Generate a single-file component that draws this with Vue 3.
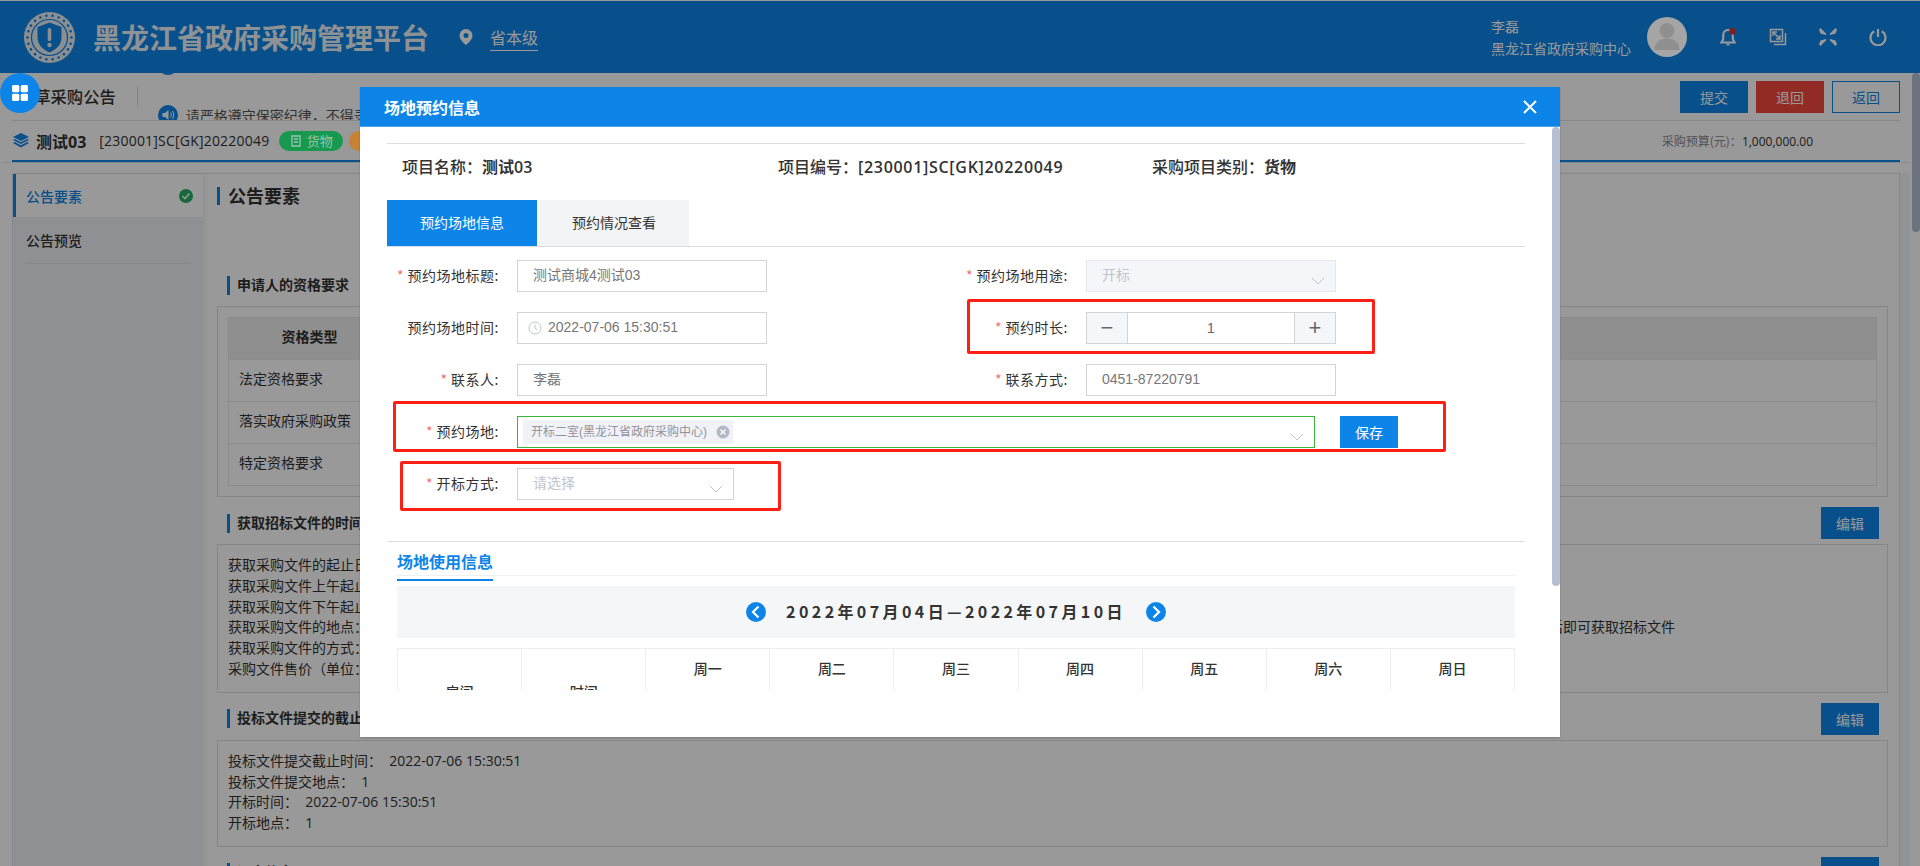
<template>
  <div class="page">
    <header class="topbar">
      <svg class="logo" viewBox="0 0 51 51">
        <circle cx="25.5" cy="25.5" r="25.5" fill="#e9eef3" />
        <circle v-for="(d, i) in logoDots" :key="i" :cx="d.x" :cy="d.y" r="1.3" fill="#0d85e8" />
        <circle cx="25.5" cy="25.5" r="18" fill="#e9eef3" stroke="#0d85e8" stroke-width="1.2" />
        <path d="M25.5 10.5l12 4.500v10c0 7.500-5 12.500-12 15.500-7-3-12-8-12-15.500V15z" fill="#0d85e8" />
        <rect x="23.700" y="16" width="3.600" height="13" rx="1.600" fill="#e9eef3" />
        <circle cx="25.500" cy="33" r="2.200" fill="#e9eef3" />
      </svg>
      <h1 class="brand">黑龙江省政府采购管理平台</h1>
      <svg class="pin" viewBox="0 0 14 16">
        <path d="M7 0a6.500 6.500 0 0 0-6.500 6.500C.5 11 7 16 7 16s6.500-5 6.500-9.500A6.500 6.500 0 0 0 7 0zm0 9a2.500 2.500 0 1 1 0-5 2.500 2.500 0 0 1 0 5z" fill="#fff" />
      </svg>
      <span class="region">省本级</span>

      <div class="user">
        <div class="user-name">李磊</div>
        <div>黑龙江省政府采购中心</div>
      </div>
      <svg class="avatar" viewBox="0 0 40 40">
        <circle cx="20" cy="20" r="20" fill="#a5a5a5" />
        <circle cx="20" cy="13.500" r="7.500" fill="#8f8f8f" />
        <path d="M7.500 33c0-7 5-11.500 12.500-11.500S32.500 26 32.500 33z" fill="#8f8f8f" />
      </svg>
      <div class="top-icons">
        <svg class="top-icon" viewBox="0 0 18 18">
          <path d="M9 2c-3.200 0-4.800 2.500-4.800 5.300v4L2.500 14.500h13l-1.700-3.200v-4C13.800 4.500 12.200 2 9 2z" fill="none" stroke="#fff" stroke-width="2.200" />
          <path d="M6.500 15.500h5L9 18z" fill="#fff" />
          <circle cx="13.500" cy="3.300" r="3.300" fill="#e2312a" />
        </svg>
        <svg class="top-icon" viewBox="0 0 18 18" fill="none" stroke="#fff">
          <path d="M1.500 1.500h12v12h-12z" stroke-width="1.500" />
          <path d="M16.500 5v11.500H5" stroke-width="1.500" />
          <path d="M4 4l7 7M4 8V4h4M11 7v4H7" stroke-width="1.500" />
        </svg>
        <svg class="top-icon" viewBox="0 0 18 18" fill="#fff">
          <path d="M1.500 0L7.500 6l-1 1-5-1.500L0 1.500zM16.500 0L10.500 6l1 1 5-1.500L18 1.500zM1.500 18l6-6-1-1-5 1.500L0 16.500zM16.500 18l-6-6 1-1 5 1.500L18 16.500z" />
        </svg>
        <svg class="top-icon" viewBox="0 0 18 18" fill="none" stroke="#fff" stroke-width="2.200">
          <path d="M5.200 3.300a7.500 7.500 0 1 0 7.600 0" />
          <path d="M9 1v8" />
        </svg>
      </div>
    </header>

    <div class="crumb-bar">
      <span class="crumb-title">起草采购公告</span>
      <i class="crumb-sep"></i>
      <div class="notice-list">
        <div class="notice-item" v-for="n in notices" :key="n.id">
          <svg class="notice-icon" viewBox="0 0 20 20">
            <circle cx="10" cy="10" r="10" fill="#0d85e8" />
            <path d="M4.500 8h2.500l3.500-3v10L7 12H4.500z" fill="#fff" />
            <path d="M12.500 7.500c1 1.500 1 3.500 0 5M14.500 6c1.500 2.300 1.500 5.700 0 8" fill="none" stroke="#fff" />
          </svg>
          <span>{{ n.text }}</span>
        </div>
      </div>
      <div class="crumb-actions">
        <button class="btn btn-primary">提交</button>
        <button class="btn btn-danger">退回</button>
        <button class="btn btn-outline">返回</button>
      </div>
    </div>

    <div class="project-wrap">
      <div class="project-bar">
        <svg class="layers" viewBox="0 0 16 15" fill="#0d85e8">
          <path d="M8 0l8 4-8 4-8-4z" />
          <path d="M1.800 6L8 9.200 14.200 6 16 7l-8 4-8-4z" />
          <path d="M1.800 9L8 12.200 14.200 9 16 10l-8 4.500L0 10z" />
        </svg>
        <strong class="project-name">测试03</strong>
        <span class="project-code">[230001]SC[GK]20220049</span>
        <span class="tag tag-green">
          <svg viewBox="0 0 12 12" width="12" height="12" fill="none" stroke="currentColor" stroke-width="1.300">
            <path d="M2 1h8v10H2zM4 4h4M4 7h4" />
          </svg>
          货物
        </span>
        <span class="tag tag-orange">公开</span>
        <span class="budget">采购预算(元)：<b>1,000,000.00</b></span>
      </div>
    </div>

    <div class="content">
      <aside class="side">
        <div class="side-item active">
          公告要素
          <svg viewBox="0 0 14 14" width="14" height="14">
            <circle cx="7" cy="7" r="7" fill="#27b060" />
            <path d="M3.500 7l2.500 2.500 4.500-5" fill="none" stroke="#fff" stroke-width="1.600" />
          </svg>
        </div>
        <div class="side-item second">公告预览</div>
      </aside>

      <main class="main">
        <h2 class="main-title">公告要素</h2>

        <section class="section first">
          <div class="section-head"><h3>申请人的资格要求</h3></div>
          <div class="box box-table">
            <table class="req-table">
              <thead>
                <tr><th class="col-type">资格类型</th><th>资格要求</th></tr>
              </thead>
              <tbody>
                <tr v-for="r in reqRows" :key="r"><td>{{ r }}</td><td></td></tr>
              </tbody>
            </table>
          </div>
        </section>

        <section class="section">
          <div class="section-head">
            <h3>获取招标文件的时间地点</h3>
            <button class="btn btn-primary btn-edit">编辑</button>
          </div>
          <div class="box">
            <p>获取采购文件的起止日期：</p>
            <p>获取采购文件上午起止时间：</p>
            <p>获取采购文件下午起止时间：</p>
            <p class="wide-line"><span>获取采购文件的地点：</span><span>后即可获取招标文件</span></p>
            <p>获取采购文件的方式：</p>
            <p>采购文件售价（单位：元）：</p>
          </div>
        </section>

        <section class="section">
          <div class="section-head">
            <h3>投标文件提交的截止时间</h3>
            <button class="btn btn-primary btn-edit">编辑</button>
          </div>
          <div class="box">
            <p>投标文件提交截止时间：&nbsp; 2022-07-06 15:30:51</p>
            <p>投标文件提交地点：&nbsp; 1</p>
            <p>开标时间：&nbsp; 2022-07-06 15:30:51</p>
            <p>开标地点：&nbsp; 1</p>
          </div>
        </section>

        <section class="section">
          <div class="section-head">
            <h3>评审信息</h3>
            <button class="btn btn-primary btn-edit">编辑</button>
          </div>
        </section>
      </main>
    </div>

    <div class="page-scrollbar"></div>
    <div class="mask"></div>

    <button class="float-btn">
      <svg viewBox="0 0 16 16" width="16" height="16" fill="#fff">
        <rect x="0" y="0" width="7.300" height="7.300" rx="1.500" />
        <rect x="8.700" y="0" width="7.300" height="7.300" rx="1.500" />
        <rect x="0" y="8.700" width="7.300" height="7.300" rx="1.500" />
        <rect x="8.700" y="8.700" width="7.300" height="7.300" rx="1.500" />
      </svg>
    </button>

    <!-- 弹窗 -->
    <div class="modal">
      <div class="modal-head">
        <span>场地预约信息</span>
        <svg viewBox="0 0 14 14" width="14" height="14" fill="none" stroke="#fff" stroke-width="2">
          <path d="M1 1l12 12M13 1L1 13" />
        </svg>
      </div>
      <div class="modal-body">
        <div class="info-row">
          <span>项目名称：<b>测试03</b></span>
          <span>项目编号：<b class="code">[230001]SC[GK]20220049</b></span>
          <span>采购项目类别：<b>货物</b></span>
        </div>

        <div class="tabs">
          <div class="tab active">预约场地信息</div>
          <div class="tab">预约情况查看</div>
        </div>

        <div class="form">
          <div class="form-item">
            <label class="required">预约场地标题:</label>
            <div class="input">测试商城4测试03</div>
          </div>
          <div class="form-item">
            <label class="required">预约场地用途:</label>
            <div class="input select disabled">
              开标
              <svg class="chevron" viewBox="0 0 14 8"><path d="M1 1l6 6 6-6" /></svg>
            </div>
          </div>

          <div class="form-item">
            <label>预约场地时间:</label>
            <div class="input has-icon">
              <svg class="clock" viewBox="0 0 14 14" fill="none" stroke="#c0c4cc">
                <circle cx="7" cy="7" r="6" />
                <path d="M7 3.500V7l2.500 2" />
              </svg>
              2022-07-06 15:30:51
            </div>
          </div>
          <div class="form-item">
            <label class="required">预约时长:</label>
            <div class="stepper">
              <span class="step">−</span>
              <span class="step-value">1</span>
              <span class="step">+</span>
            </div>
          </div>

          <div class="form-item">
            <label class="required">联系人:</label>
            <div class="input">李磊</div>
          </div>
          <div class="form-item">
            <label class="required">联系方式:</label>
            <div class="input">0451-87220791</div>
          </div>

          <div class="form-item full">
            <label class="required">预约场地:</label>
            <div class="input select room">
              <span class="chip">
                开标二室(黑龙江省政府采购中心)
                <svg viewBox="0 0 14 14" width="14" height="14">
                  <circle cx="7" cy="7" r="6.500" fill="#b4b8c2" />
                  <path d="M4.500 4.500l5 5M9.500 4.500l-5 5" stroke="#fff" stroke-width="1.300" />
                </svg>
              </span>
              <svg class="chevron" viewBox="0 0 14 8"><path d="M1 1l6 6 6-6" /></svg>
            </div>
            <button class="btn save">保存</button>
          </div>

          <div class="form-item full">
            <label class="required">开标方式:</label>
            <div class="input select way">
              请选择
              <svg class="chevron" viewBox="0 0 14 8"><path d="M1 1l6 6 6-6" /></svg>
            </div>
          </div>
        </div>

        <div class="usage">
          <div class="usage-head"><span>场地使用信息</span></div>
          <div class="date-bar">
            <svg class="date-arrow" viewBox="0 0 20 20">
              <circle cx="10" cy="10" r="10" fill="#0d85e8" />
              <path d="M12.500 4.500L7 10l5.500 5.500" fill="none" stroke="#fff" stroke-width="2.200" />
            </svg>
            <span class="date-text">2022年07月04日—2022年07月10日</span>
            <svg class="date-arrow" viewBox="0 0 20 20">
              <circle cx="10" cy="10" r="10" fill="#0d85e8" />
              <path d="M7.500 4.500L13 10l-5.500 5.500" fill="none" stroke="#fff" stroke-width="2.200" />
            </svg>
          </div>
          <table class="week-table">
            <thead>
              <tr>
                <th rowspan="2" class="span-cell">房间</th>
                <th rowspan="2" class="span-cell">时间</th>
                <th v-for="d in weekDays" :key="d.name">{{ d.name }}</th>
              </tr>
              <tr>
                <th v-for="d in weekDays" :key="d.date">{{ d.date }}</th>
              </tr>
            </thead>
          </table>
        </div>

        <div class="mark mark-duration"></div>
        <div class="mark mark-room"></div>
        <div class="mark mark-way"></div>
      </div>
      <div class="modal-foot"></div>
      <div class="modal-scrollbar"></div>
    </div>
  </div>
</template>

<script setup>
// 徽标外圈的小圆点
const logoDots = Array.from({ length: 22 }, (_, i) => {
  const a = (i / 22) * Math.PI * 2
  return { x: 25.5 + Math.cos(a) * 22, y: 25.5 + Math.sin(a) * 22 }
})

const notices = [
  { id: 1, text: '请严格遵守保密纪律，不得录音录像' },
  { id: 2, text: '请严格遵守保密纪律，不得录音录像' },
]

const reqRows = ['法定资格要求', '落实政府采购政策', '特定资格要求']

const weekDays = [
  { name: '周一', date: '07-04' },
  { name: '周二', date: '07-05' },
  { name: '周三', date: '07-06' },
  { name: '周四', date: '07-07' },
  { name: '周五', date: '07-08' },
  { name: '周六', date: '07-09' },
  { name: '周日', date: '07-10' },
]
</script>

<style>
html,
body {
  margin: 0;
  overflow: hidden;
  background: #fff;
}
</style>

<style scoped>
.page {
  position: relative;
  width: 1920px;
  height: 866px;
  padding-top: 1px;
  box-sizing: border-box;
  overflow: hidden;
  background: #fff;
  color: #333;
  font-family: "Noto Sans CJK SC", sans-serif;
  font-size: 14px;
}

p,
h1,
h2,
h3 {
  margin: 0;
}

/* 顶部 */
.topbar {
  display: flex;
  align-items: center;
  height: 72px;
  padding: 0 33px 0 24px;
  background: #0d85e8;
  color: #fff;
}

.logo {
  width: 51px;
  height: 51px;
  flex: none;
}

.brand {
  margin-left: 18px;
  font-size: 28px;
  font-weight: 700;
  color: #eef3f8;
}

.pin {
  width: 14px;
  height: 16px;
  margin-left: 30px;
}

.region {
  margin-left: 17px;
  font-size: 16px;
  line-height: 26px;
  border-bottom: 1px solid #fff;
}

.user {
  margin-left: auto;
  width: 140px;
  line-height: 21px;
}

.user-name {
  margin-bottom: 1px;
}

.avatar {
  position: relative;
  z-index: 11;
  width: 40px;
  height: 40px;
  margin-left: 16px;
}

.top-icons {
  display: flex;
  gap: 32px;
  margin-left: 32px;
}

.top-icon {
  width: 18px;
  height: 18px;
}

/* 标题栏 */
.crumb-bar {
  display: flex;
  align-items: flex-start;
  height: 47px;
  margin: 0 20px 0 12px;
  overflow: hidden;
  border-bottom: 1px solid #e3e5ea;
}

.crumb-title {
  margin: 12px 0 0 6px;
  font-size: 16.300px;
  font-weight: 500;
  line-height: 22px;
}

.crumb-sep {
  width: 1px;
  height: 20px;
  margin: 14px 20px 0 21px;
  background: #ddd;
}

.notice-list {
  display: flex;
  flex-direction: column;
  gap: 30px;
  margin-top: -18px;
}

.notice-item {
  display: flex;
  align-items: center;
  gap: 8px;
  height: 20px;
  color: #555;
}

.notice-icon {
  width: 20px;
  height: 20px;
}

.crumb-actions {
  display: flex;
  gap: 8px;
  margin: 8px 0 0 auto;
}

.btn {
  width: 68px;
  height: 32px;
  padding: 0;
  border: 1px solid transparent;
  box-sizing: border-box;
  font-family: inherit;
  font-size: 14px;
}

.btn-primary {
  background: #0d85e8;
  color: #fff;
}

.btn-danger {
  background: #f3483f;
  color: #fff;
}

.btn-outline {
  background: #fff;
  border-color: #0d85e8;
  color: #0d85e8;
}

/* 项目信息 */
.project-wrap {
  margin: 0 10px 0 2px;
  border-bottom: 1px solid #e3e5ea;
}

.project-bar {
  display: flex;
  align-items: center;
  height: 39px;
  margin: 0 10px;
  padding-left: 1px;
  border-bottom: 2px solid #0d85e8;
}

.layers {
  width: 16px;
  height: 15px;
}

.project-name {
  margin-left: 7px;
  font-family: "Open Sans", "Noto Sans CJK SC", sans-serif;
  font-size: 16px;
  font-weight: 700;
}

.project-code {
  margin-left: 13px;
  font-family: "Open Sans", "Noto Sans CJK SC", sans-serif;
  letter-spacing: 0.2px;
}

.tag {
  position: relative;
  z-index: 11;
  display: inline-flex;
  align-items: center;
  justify-content: center;
  gap: 5px;
  width: 64px;
  height: 20px;
  border-radius: 10px;
  font-size: 13px;
}

.tag-green {
  margin-left: 10px;
  background: #179a50;
  color: #9cc4ac;
}

.tag-orange {
  margin-left: 6px;
  background: #c98232;
  color: #e5cba8;
}

.budget {
  margin-left: auto;
  margin-right: 87px;
  font-size: 12px;
  color: #888;
}

.budget b {
  font-family: "Open Sans", sans-serif;
  font-size: 12px;
  font-weight: 400;
  color: #333;
}

/* 内容 */
.content {
  display: flex;
  height: 720px;
  margin: 10px 20px 0 12px;
  border: 1px solid #e3e5ea;
  box-shadow: 10px 0 0 #f3f5f7;
}

.side {
  flex: none;
  width: 190px;
  background: #eef0f5;
  box-shadow: 2px 0 4px rgba(0, 0, 0, 0.06);
}

.side-item {
  display: flex;
  align-items: center;
  justify-content: space-between;
  margin-left: 13px;
  margin-right: 13px;
  font-weight: 500;
}

.side-item.active {
  height: 43px;
  margin: 0;
  padding: 0 10px 0 10px;
  border-left: 3px solid #0d85e8;
  background: #fff;
  color: #0d85e8;
  box-sizing: border-box;
}

.side-item.second {
  height: 46px;
  border-bottom: 1px solid #dcdfe6;
}

.main {
  flex: 1;
  min-width: 0;
  padding: 13px 11px 0 14px;
}

.main-title {
  height: 18px;
  padding-left: 8px;
  border-left: 3px solid #0d85e8;
  font-size: 18px;
  font-weight: 700;
  line-height: 16px;
}

.section {
  margin-top: 10px;
}

.section.first {
  margin-top: 64px;
}

.section-head {
  display: flex;
  align-items: center;
  justify-content: space-between;
  height: 32px;
  padding: 0 9px 0 10px;
}

.section-head h3 {
  height: 19px;
  padding-left: 7px;
  border-left: 3px solid #0d85e8;
  font-size: 14px;
  font-weight: 700;
  line-height: 17px;
}

.btn-edit {
  width: 58px;
}

.box {
  margin-top: 5px;
  padding: 10px 10px 12px;
  border: 1px solid #dcdfe6;
  font-family: "Open Sans", "Noto Sans CJK SC", sans-serif;
  line-height: 20.800px;
}

.box-table {
  padding: 10px;
}

.wide-line {
  display: flex;
  justify-content: space-between;
  width: 1447px;
}

.req-table {
  width: 100%;
  border-collapse: collapse;
  table-layout: fixed;
}

.req-table th,
.req-table td {
  height: 42px;
  padding: 0 10px 2px;
  border: 1px solid #e6e8ec;
  box-sizing: border-box;
  text-align: left;
}

.req-table th {
  background: #eee;
  font-weight: 700;
}

.req-table th.col-type {
  width: 162px;
  text-align: center;
}

.page-scrollbar {
  position: absolute;
  top: 73px;
  right: 0;
  width: 8px;
  height: 159px;
  border-radius: 4px;
  background: #b6c0d2;
}

.mask {
  position: absolute;
  inset: 0;
  z-index: 10;
  background: rgba(0, 0, 0, 0.4);
}

.float-btn {
  position: absolute;
  top: 73px;
  left: 0;
  z-index: 20;
  display: flex;
  align-items: center;
  justify-content: center;
  width: 40px;
  height: 40px;
  padding: 0;
  border: 0;
  border-radius: 50%;
  background: #0d85e8;
}

/* 弹窗 */
.modal {
  position: absolute;
  top: 87px;
  left: 360px;
  z-index: 20;
  width: 1200px;
  height: 650px;
  background: #fff;
  box-shadow: 0 1px 2px rgba(0, 0, 0, 0.2);
}

.modal-head {
  display: flex;
  align-items: center;
  justify-content: space-between;
  height: 39px;
  padding: 0 23px 0 24px;
  border-bottom: 1px solid #4ea5ee;
  background: #0d85e8;
  color: #fff;
  font-size: 16px;
  font-weight: 700;
}

.modal-body {
  position: relative;
  height: 563px;
  padding: 16px 35px 0 27px;
  box-sizing: border-box;
  overflow: hidden;
}

.modal-scrollbar {
  position: absolute;
  top: 40px;
  right: 0;
  width: 8px;
  height: 459px;
  border-radius: 4px;
  background: #b6c0d2;
}

.info-row {
  display: grid;
  grid-template-columns: 376px 374px 1fr;
  height: 46px;
  margin-bottom: 10px;
  padding-left: 15px;
  border-top: 1px solid #d8dde8;
  font-family: "Open Sans", "Noto Sans CJK SC", sans-serif;
  font-size: 16px;
  font-weight: 500;
  line-height: 46px;
}

.info-row b {
  font-weight: 600;
}

.info-row .code {
  letter-spacing: 0.7px;
}

.tabs {
  display: flex;
  gap: 2px;
  border-bottom: 1px solid #d8dde8;
}

.tab {
  width: 150px;
  height: 46px;
  background: #f3f4f6;
  line-height: 45px;
  text-align: center;
}

.tab.active {
  background: #0d85e8;
  color: #fff;
}

.form {
  display: grid;
  grid-template-columns: 569px 1fr;
  row-gap: 20px;
  margin-top: 13px;
}

.form-item {
  display: flex;
  align-items: center;
  height: 32px;
}

.form-item.full {
  grid-column: 1 / 3;
}

.form-item label {
  flex: none;
  width: 112px;
  margin-right: 18px;
  padding-bottom: 2px;
  letter-spacing: 0.5px;
  text-align: right;
}

.required::before {
  content: "* ";
  color: #f56c6c;
}

.input {
  position: relative;
  width: 250px;
  height: 32px;
  padding: 0 15px;
  border: 1px solid #d4d4d4;
  box-sizing: border-box;
  color: #777;
  font-family: "Liberation Sans", "Noto Sans CJK SC", sans-serif;
  line-height: 28px;
}

.has-icon {
  padding-left: 30px;
}

.clock {
  position: absolute;
  top: 8px;
  left: 10px;
  width: 14px;
  height: 14px;
}

.chevron {
  position: absolute;
  top: 16px;
  right: 10px;
  width: 14px;
  height: 8px;
  fill: none;
  stroke: #c0c4cc;
}

.disabled {
  border-color: #e4e7ed;
  background: #f5f6fa;
  color: #c0c4cc;
}

.stepper {
  display: flex;
  width: 250px;
  height: 32px;
  border: 1px solid #d4d4d4;
  box-sizing: border-box;
  color: #666;
  font-family: "Liberation Sans", sans-serif;
  line-height: 30px;
  text-align: center;
}

.step {
  width: 40px;
  background: #f5f6fa;
  font-size: 22px;
}

.step-value {
  flex: 1;
  border-left: 1px solid #d4d4d4;
  border-right: 1px solid #d4d4d4;
}

.room {
  display: flex;
  align-items: center;
  width: 798px;
  padding-left: 5px;
  border-color: #3ab53a;
}

.chip {
  display: inline-flex;
  align-items: center;
  gap: 9px;
  height: 24px;
  padding: 0 3px 0 8px;
  background: #f0f2f8;
  color: #909399;
  font-size: 12px;
  line-height: 24px;
}

.save {
  width: 58px;
  margin-left: 25px;
  border: 0;
  background: #0d85e8;
  color: #fff;
}

.way {
  width: 217px;
  color: #c0c4cc;
}

.usage {
  margin-top: 41px;
  border-top: 1px solid #d8dde8;
}

.usage-head {
  position: relative;
  height: 39px;
  margin: 0 10px;
}

.usage-head::after {
  content: "";
  position: absolute;
  left: 0;
  right: 0;
  top: 33px;
  height: 1px;
  background: #eef0f4;
}

.usage-head span {
  display: inline-block;
  height: 39px;
  padding-top: 7px;
  box-sizing: border-box;
  border-bottom: 2px solid #0d85e8;
  color: #0d85e8;
  font-size: 16px;
  font-weight: 700;
  line-height: 24px;
}

.date-bar {
  display: flex;
  align-items: center;
  justify-content: center;
  gap: 20px;
  height: 52px;
  margin: 5px 10px 0;
  background: #f5f6f8;
}

.date-arrow {
  width: 20px;
  height: 20px;
}

.date-text {
  padding-bottom: 2px;
  font-size: 16px;
  font-weight: 700;
  letter-spacing: 3.400px;
}

.week-table {
  width: 1118px;
  margin: 10px 10px 0;
  border-collapse: collapse;
  table-layout: fixed;
}

.week-table th {
  height: 42px;
  padding: 0 0 4px;
  border: 1px solid #eceef4;
  box-sizing: border-box;
  font-weight: 500;
}

.week-table th.span-cell {
  padding: 0;
}

/* 红框标注 */
.mark {
  position: absolute;
  border: 3px solid #ff2015;
  border-radius: 2px;
  box-sizing: border-box;
}

.mark-duration {
  top: 172px;
  left: 607px;
  width: 408px;
  height: 55px;
}

.mark-room {
  top: 274px;
  left: 33px;
  width: 1053px;
  height: 51px;
}

.mark-way {
  top: 334px;
  left: 40px;
  width: 381px;
  height: 50px;
}
</style>
